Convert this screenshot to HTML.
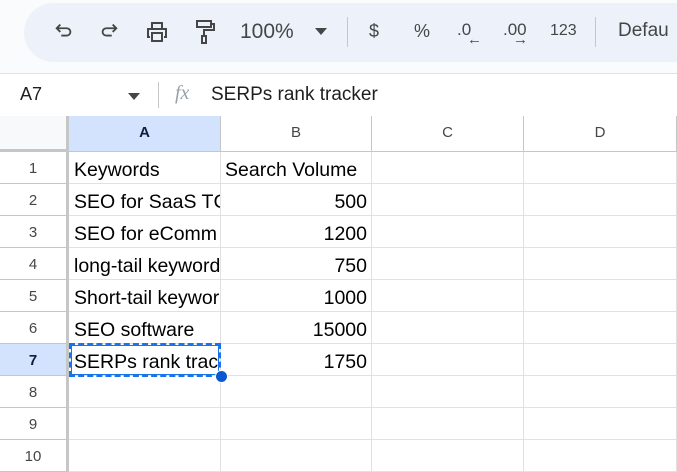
<!DOCTYPE html>
<html><head><style>
body{margin:0;width:677px;height:471px;overflow:hidden;background:#fff;font-family:"Liberation Sans",Arial,sans-serif;position:relative}
.top{position:absolute;left:0;top:0;width:677px;height:73px;background:#f9fbfd}
.pill{position:absolute;left:24px;top:3px;width:700px;height:59px;background:#edf2fa;border-radius:30px}
.t{position:absolute;color:#444746;font-size:20px;top:20px}
.div{position:absolute;top:17px;width:1px;height:30px;background:#c7c7c7}
.fb{position:absolute;left:0;top:73px;width:677px;height:43px;background:#fff;border-top:1px solid #e1e3e1}
.grid{position:absolute;left:0;top:116px}
.c{position:absolute;box-sizing:border-box;border-right:1px solid #e1e1e1;border-bottom:1px solid #e1e1e1;font-size:19.5px;color:#000;white-space:nowrap;overflow:hidden;line-height:36px}
.h{background:#f8f9fa;color:#444746;font-size:15px;text-align:center;border-color:#c4c7c5;line-height:32px}
</style></head><body>
<div class="top"><div class="pill"></div>
<svg style="position:absolute;left:53px;top:20px" width="22" height="22" viewBox="0 0 24 24" fill="none" stroke="#444746" stroke-width="2"><path d="M5 9h10a4 4 0 0 1 0 8H9M8 5L4 9l4 4"/></svg>
<svg style="position:absolute;left:98px;top:20px" width="22" height="22" viewBox="0 0 24 24" fill="none" stroke="#444746" stroke-width="2"><path d="M19 9H9a4 4 0 0 0 0 8h6M16 5l4 4-4 4"/></svg>
<svg style="position:absolute;left:145px;top:20px" width="24" height="24" viewBox="0 0 24 24" fill="none" stroke="#444746" stroke-width="2"><path d="M7 8V3h10v5M5 17H3V9h18v8h-2M7 13h10v8H7z"/></svg>
<svg style="position:absolute;left:193px;top:18px" width="24" height="28" viewBox="0 0 24 28" fill="none" stroke="#444746" stroke-width="2"><path d="M4 3h14v6H4zM18 6h3v6H11v6M9 18h4v7H9z"/></svg>
<div class="t" style="left:240px;font-size:21px">100%</div>
<svg style="position:absolute;left:315px;top:28px" width="12" height="7"><path d="M0 0h12L6 7z" fill="#444746"/></svg>
<div class="div" style="left:347px"></div>
<div class="t" style="left:369px;font-size:18px;top:21px">$</div>
<div class="t" style="left:414px;font-size:18px;top:21px">%</div>
<div class="t" style="left:457px;font-size:17px;top:20px">.0</div>
<div class="t" style="left:467px;font-size:15px;top:31px;font-weight:bold">←</div>
<div class="t" style="left:503px;font-size:17px;top:20px">.00</div>
<div class="t" style="left:513px;font-size:15px;top:31px;font-weight:bold">→</div>
<div class="t" style="left:550px;font-size:16px;top:22px">123</div>
<div class="div" style="left:595px"></div>
<div class="t" style="left:618px;font-size:19px">Defau</div>
</div>
<div class="fb">
<div style="position:absolute;left:20px;top:10px;font-size:18px;color:#1f1f1f">A7</div>
<svg style="position:absolute;left:128px;top:19px" width="12" height="7"><path d="M0 0h12L6 7z" fill="#444746"/></svg>
<div style="position:absolute;left:158px;top:8px;width:1px;height:26px;background:#c7c7c7"></div>
<div style="position:absolute;left:175px;top:8px;font-size:20px;color:#9aa0a6;font-style:italic;font-family:'Liberation Serif',serif">fx</div>
<div style="position:absolute;left:211px;top:10px;font-size:19px;color:#1f1f1f">SERPs rank tracker</div>
</div>
<div class="grid">
<div class="c h" style="left:0;top:0;width:69px;height:36px;border-right:3px solid #c4c7c5;border-bottom:3px solid #c4c7c5"></div>
<div class="c h" style="left:69px;top:0;width:152px;height:36px;line-height:34px;background:#d3e3fd;font-weight:bold;color:#0b1f3f">A</div>
<div class="c h" style="left:221px;top:0;width:151px;height:36px;line-height:34px;background:#fff">B</div>
<div class="c h" style="left:372px;top:0;width:152px;height:36px;line-height:34px;background:#fff">C</div>
<div class="c h" style="left:524px;top:0;width:153px;height:36px;line-height:34px;background:#fff">D</div>
</div>
<div id="rows"></div>
<script>
var d=[["Keywords","Search Volume",1],["SEO for SaaS TC","500"],["SEO for eComm","1200"],["long-tail keyword","750"],["Short-tail keywor","1000"],["SEO software","15000"],["SERPs rank trac","1750"],["",""],["",""],["",""]];
var h="";
for(var i=0;i<10;i++){var y=152+i*32;var sel=i==6;
h+='<div class="c h" style="left:0;top:'+y+'px;width:69px;height:32px;border-right:3px solid #c4c7c5;line-height:34px;'+(sel?'background:#d3e3fd;font-weight:bold;color:#0b1f3f;':'background:#fff;')+'">'+(i+1)+'</div>';
h+='<div class="c" style="left:69px;top:'+y+'px;width:152px;height:32px;padding-left:5px">'+d[i][0]+'</div>';
h+='<div class="c" style="left:221px;top:'+y+'px;width:151px;height:32px;padding:0 4px;text-align:'+(d[i][2]?'left':'right')+'">'+d[i][1]+'</div>';
h+='<div class="c" style="left:372px;top:'+y+'px;width:152px;height:32px"></div>';
h+='<div class="c" style="left:524px;top:'+y+'px;width:153px;height:32px"></div>';}
h+='<div style="position:absolute;left:69px;top:343px;width:152px;height:34px;box-sizing:border-box;border:3px dashed #1a73e8;outline:1px solid #1a73e8;outline-offset:-3px"></div>';
h+='<div style="position:absolute;left:215px;top:370px;width:13px;height:13px;border-radius:50%;background:#0b57d0;border:1px solid #fff;box-sizing:border-box"></div>';
document.getElementById("rows").innerHTML=h;
</script>
</body></html>
